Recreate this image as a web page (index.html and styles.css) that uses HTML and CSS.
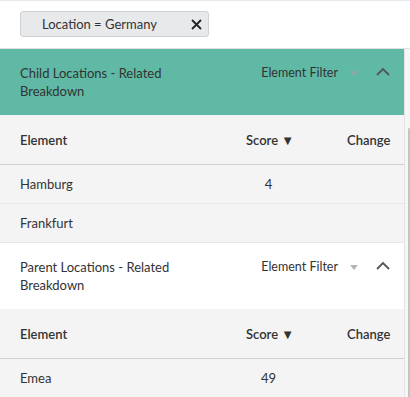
FILE: index.html
```html
<!DOCTYPE html>
<html lang="en">
<head>
  <meta charset="UTF-8" />
  <title>Related Breakdown</title>
  <link rel="stylesheet" href="styles.css">
</head>
<body>
  <div class="filter-bar">
    <div class="chip">
      <span class="chip-label">Location = Germany</span>
      <svg class="chip-close" width="11" height="11" viewBox="0 0 11 11"><path d="M1 1 L10 10 M10 1 L1 10" stroke="#222" stroke-width="1.8"/></svg>
    </div>
  </div>

  <div class="page">
    <div class="content">
      <div class="panel-head active">
        <div class="panel-title">Child Locations - Related Breakdown</div>
        <div class="panel-tools">
          <span class="filter-label">Element Filter</span>
          <span class="caret"></span>
          <svg class="chevron" width="14" height="9" viewBox="0 0 14 9"><path d="M1 8 L7 2 L13 8" fill="none" stroke="#555" stroke-width="1.8"/></svg>
        </div>
      </div>
      <div class="table-head">
        <span class="col-element">Element</span>
        <span class="col-score">Score &#9660;</span>
        <span class="col-change">Change</span>
      </div>
      <div class="row">
        <span class="col-element">Hamburg</span>
        <span class="col-score num">4</span>
        <span class="col-change"></span>
      </div>
      <div class="row">
        <span class="col-element">Frankfurt</span>
        <span class="col-score num"></span>
        <span class="col-change"></span>
      </div>

      <div class="panel-head">
        <div class="panel-title">Parent Locations - Related Breakdown</div>
        <div class="panel-tools">
          <span class="filter-label">Element Filter</span>
          <span class="caret"></span>
          <svg class="chevron" width="14" height="9" viewBox="0 0 14 9"><path d="M1 8 L7 2 L13 8" fill="none" stroke="#555" stroke-width="1.8"/></svg>
        </div>
      </div>
      <div class="table-head">
        <span class="col-element">Element</span>
        <span class="col-score">Score &#9660;</span>
        <span class="col-change">Change</span>
      </div>
      <div class="row">
        <span class="col-element">Emea</span>
        <span class="col-score num">49</span>
        <span class="col-change"></span>
      </div>
    </div>
    <div class="scrollbar"><div class="thumb"></div></div>
  </div>
</body>
</html>
```

FILE: styles.css
```css
body {
  margin: 0;
  font-family: Lato, "Open Sans", sans-serif;
  font-size: 13px;
  color: #333;
  background: #fff;
}

.filter-bar {
  height: 49px;
  border-top: 1px solid #e6eaee;
  border-bottom: 1px solid #e2e2e2;
  padding: 10px 0 0 20px;
  box-sizing: border-box;
}

.chip {
  width: 189px;
  height: 26px;
  box-sizing: border-box;
  background: #e7e9eb;
  border: 1px solid #cfd2d5;
  border-radius: 3px;
  display: flex;
  align-items: center;
  justify-content: space-between;
  padding: 0 6px 0 21px;
}

.page {
  display: flex;
}

.content {
  flex: 1;
  border-right: 1px solid #e4e4e4;
}

.scrollbar {
  width: 5px;
  background: #f6f6f6;
  display: flex;
  justify-content: flex-end;
}

.thumb {
  width: 2px;
  margin-top: 79px;
  background: #c4c4c4;
  border-radius: 1px;
}

.panel-head {
  height: 66px;
  box-sizing: border-box;
  display: flex;
  justify-content: space-between;
  padding: 15px 14px 0 20px;
  line-height: 18px;
  background: #fff;
}

.panel-head.active {
  background: #5fb9a4;
}

.panel-title {
  width: 175px;
}

.panel-tools {
  display: flex;
  align-items: flex-start;
}

.filter-label {
  font-size: 12.5px;
}

.caret {
  margin: 7px 18px 0 12px;
  border-left: 4px solid transparent;
  border-right: 4px solid transparent;
  border-top: 5px solid #b5b5b5;
}

.panel-head.active .caret {
  border-top-color: #8fa9a2;
}

.chevron {
  margin-top: 3px;
}

.table-head,
.row {
  display: flex;
  align-items: center;
  padding: 0 16px 0 20px;
  background: #f4f4f4;
}

.table-head {
  height: 49px;
  border-bottom: 1px solid #d2d2d2;
  font-weight: 600;
}

.row {
  height: 38px;
  border-bottom: 1px solid #e8e8e8;
}

.col-element {
  flex: 1;
}

.col-score {
  width: 101px;
}

.col-score.num {
  box-sizing: border-box;
  padding-right: 56px;
  text-align: center;
}

.col-change {
  width: 41px;
  text-align: right;
}
```
